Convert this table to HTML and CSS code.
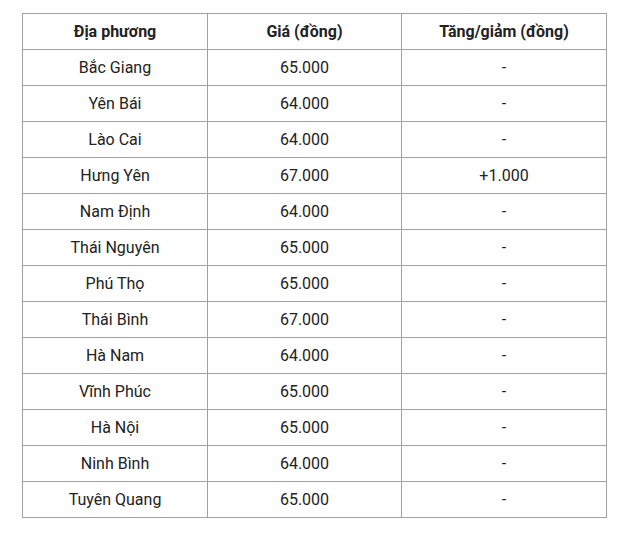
FILE: index.html
```html
<!DOCTYPE html>
<html lang="vi">
<head>
<meta charset="utf-8">
<link rel="stylesheet" href="styles.css">
</head>
<body>
<table class="price-table">
  <colgroup>
    <col class="c1"><col class="c2"><col class="c3">
  </colgroup>
  <thead>
    <tr><th>Địa phương</th><th>Giá (đồng)</th><th>Tăng/giảm (đồng)</th></tr>
  </thead>
  <tbody>
    <tr><td>Bắc Giang</td><td>65.000</td><td>-</td></tr>
    <tr><td>Yên Bái</td><td>64.000</td><td>-</td></tr>
    <tr><td>Lào Cai</td><td>64.000</td><td>-</td></tr>
    <tr><td>Hưng Yên</td><td>67.000</td><td>+1.000</td></tr>
    <tr><td>Nam Định</td><td>64.000</td><td>-</td></tr>
    <tr><td>Thái Nguyên</td><td>65.000</td><td>-</td></tr>
    <tr><td>Phú Thọ</td><td>65.000</td><td>-</td></tr>
    <tr><td>Thái Bình</td><td>67.000</td><td>-</td></tr>
    <tr><td>Hà Nam</td><td>64.000</td><td>-</td></tr>
    <tr><td>Vĩnh Phúc</td><td>65.000</td><td>-</td></tr>
    <tr><td>Hà Nội</td><td>65.000</td><td>-</td></tr>
    <tr><td>Ninh Bình</td><td>64.000</td><td>-</td></tr>
    <tr><td>Tuyên Quang</td><td>65.000</td><td>-</td></tr>
  </tbody>
</table>
</body>
</html>
```
FILE: styles.css
```css
html, body {
  margin: 0;
  padding: 0;
  background: #ffffff;
}
body {
  padding: 13px 0 0 22px;
  font-family: Roboto, "Liberation Sans", sans-serif;
  color: #222222;
}
.price-table {
  border-collapse: collapse;
  width: 584px;
  table-layout: fixed;
  font-size: 16px;
}
.c1 { width: 185px; }
.c2 { width: 194px; }
.c3 { width: 205px; }
.price-table th,
.price-table td {
  border: 1px solid #a0a0a0;
  height: 36px;
  padding: 0 8px;
  box-sizing: border-box;
  text-align: center;
  vertical-align: middle;
  line-height: 20px;
}
.price-table th {
  font-weight: 700;
}
```
